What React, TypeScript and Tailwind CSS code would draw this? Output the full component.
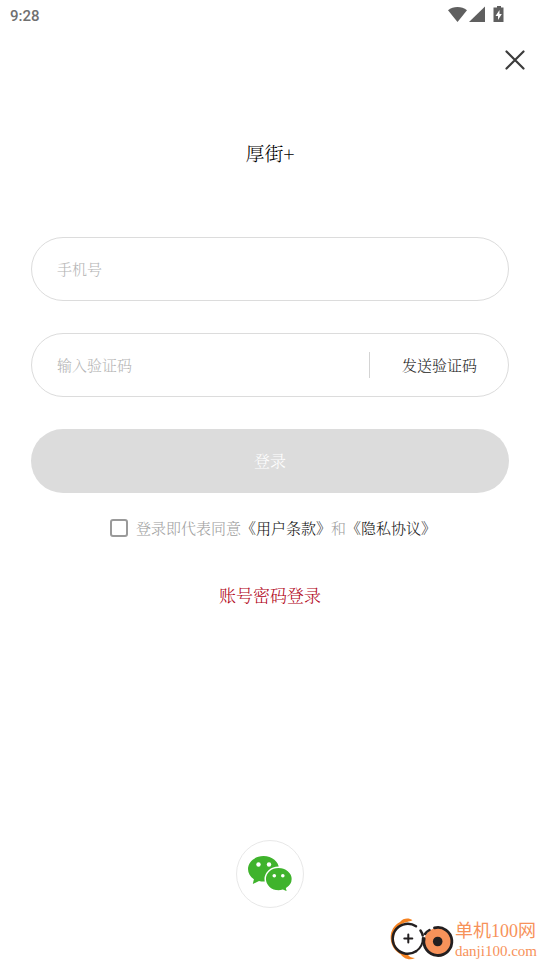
import { useState } from "react";

const StatusBar = () => (
  <div className="flex h-8 items-center justify-between pr-[35px] pl-2.5 text-[#5f5f5f]">
    <span className="font-[Roboto,sans-serif] text-[15px] leading-5 font-medium text-[#707070]">
      9:28
    </span>
    <svg
      className="mb-1 h-[18px] w-[57px]"
      viewBox="0 0 57 18"
      fill="currentColor"
      aria-hidden="true"
    >
      <path d="M0 5.200C5.400.8 13.600.8 19 5.200L9.500 17Z" />
      <path d="M37 1.500V17H21Z" />
      <path
        fillRule="evenodd"
        d="M49 1h4v1.500h2.500V17h-10V2.500H49ZM51.500 5l-4 6h2.500v4l3.800-6H51.500Z"
      />
    </svg>
  </div>
);

const WeChatIcon = () => (
  <svg className="h-9 w-11" viewBox="0 0 44 36" aria-hidden="true">
    <path
      fill="#3fb32c"
      d="M15.500 0C7 0 0 5.800 0 13.100c0 4.100 2.300 7.800 5.900 10.200L4.800 28l6.200-3c1.500.4 3 .6 4.500.6C24 25.600 31 20 31 12.900 31 5.700 24 0 15.500 0Z"
    />
    <path
      fill="#3fb32c"
      stroke="#fff"
      strokeWidth="1.500"
      d="M30.500 11.300c-7.400 0-13.300 5.200-13.300 11.800s5.900 11.800 13.300 11.800c1.600 0 3-.2 4.400-.7l4.800 2.300-1-4.100c3.500-2.200 5.700-5.500 5.700-9.300 0-6.600-6.500-11.800-13.900-11.800Z"
    />
    <g fill="#fff">
      <circle cx="10.500" cy="8.500" r="2.200" />
      <circle cx="21" cy="8.500" r="2.200" />
      <circle cx="26.300" cy="19.700" r="1.800" />
      <circle cx="34.800" cy="19.700" r="1.800" />
    </g>
  </svg>
);

const SiteLogo = () => (
  <svg
    className="h-[42px] w-16"
    viewBox="0 0 64 42"
    fill="none"
    strokeLinecap="round"
    aria-hidden="true"
  >
    <path
      fill="#f58220"
      d="M22.500 2.300C19-.5 13 0 10 4 3 7.500-.5 15 1 23c1.300 7 5.500 11 10 13.500 2 3.500 8 6.500 14 3.500-3 0-5.500-1.200-7-3C9 34 4 29 4 20.500 4 12 9.500 5.500 17 4c2-.8 4-.8 5.500-1.700Z"
    />
    <path
      stroke="#231f20"
      strokeWidth="2.500"
      d="M26 8.300A15 15 0 1 0 26 33.300"
    />
    <path
      stroke="#231f20"
      strokeWidth="2"
      d="M26 33.300C31 30 33 25.500 32.800 20M18.300 16.500v8M14.300 20.500h8"
    />
    <circle cx="47.700" cy="23.500" r="13.500" fill="#f7925a" />
    <path
      stroke="#231f20"
      strokeWidth="2.800"
      d="M44.500 9.900A14 14 0 1 1 34.200 20.500"
    />
    <path
      stroke="#231f20"
      strokeWidth="2.500"
      d="M30.500 12.500c1 1.500 1.800 3 2.200 5M39.500 12c-2 1-3.500 2.300-4.500 4"
    />
    <circle cx="47.700" cy="23.500" r="4.800" fill="#231f20" />
  </svg>
);

export default function App() {
  const [phone, setPhone] = useState("");
  const [code, setCode] = useState("");
  const [agreed, setAgreed] = useState(false);

  return (
    <div
      lang="zh-CN"
      className="flex min-h-screen flex-col bg-white font-['Noto_Serif_CJK_SC','Noto_Sans_CJK_SC',serif] text-[15px] leading-6 font-light text-[#222]"
    >
      <StatusBar />

      <header className="flex justify-end px-[15px] pt-[18px]">
        <button type="button" aria-label="关闭">
          <svg
            className="size-5"
            viewBox="0 0 20 20"
            stroke="#3c3c3c"
            strokeWidth="2.200"
            strokeLinecap="round"
            aria-hidden="true"
          >
            <path d="M1.500 1.500l17 17M18.500 1.500l-17 17" />
          </svg>
        </button>
      </header>

      <main className="flex flex-col px-[31px] pt-[69px]">
        <h1 className="text-center text-[19px] leading-7 text-black">厚街+</h1>

        <form
          className="flex flex-col gap-8 pt-[70px]"
          onSubmit={(e) => e.preventDefault()}
        >
          <input
            type="tel"
            aria-label="手机号"
            placeholder="手机号"
            value={phone}
            onChange={(e) => setPhone(e.target.value)}
            className="h-16 w-full rounded-full border border-[#dcdcdc] px-[25px] pb-0.5 outline-none placeholder:text-[#b4b4b4]"
          />

          <div className="flex h-16 items-center rounded-full border border-[#dcdcdc] pr-[31px] pl-[25px]">
            <input
              type="text"
              aria-label="输入验证码"
              placeholder="输入验证码"
              value={code}
              onChange={(e) => setCode(e.target.value)}
              className="h-full min-w-0 flex-1 pb-0.5 outline-none placeholder:text-[#b4b4b4]"
            />
            <button
              type="button"
              className="border-l border-[#d4d4d4] pl-8 leading-[26px]"
            >
              发送验证码
            </button>
          </div>

          <button
            type="submit"
            className="h-16 rounded-full bg-[#dcdcdc] text-base text-white"
          >
            登录
          </button>
        </form>

        <div className="flex items-center justify-center gap-2 pt-[23px] pl-1.5">
          <input
            id="agree"
            type="checkbox"
            checked={agreed}
            onChange={(e) => setAgreed(e.target.checked)}
            className="size-[18px] appearance-none rounded-[3px] border-2 border-[#9a9a9a] checked:bg-[#9a9a9a]"
          />
          <p className="text-[#a0a0a0]">
            <label htmlFor="agree">登录即代表同意</label>
            <a href="#terms" className="text-[#111]">
              《用户条款》
            </a>
            和
            <a href="#privacy" className="text-[#111]">
              《隐私协议》
            </a>
          </p>
        </div>

        <a
          href="#password"
          className="mt-[43px] self-center text-[17px] text-[#b00015]"
        >
          账号密码登录
        </a>
      </main>

      <footer className="mt-auto flex flex-col items-center gap-2.5 pt-10">
        <button
          type="button"
          aria-label="微信登录"
          className="flex size-[68px] items-center justify-center rounded-full border border-[#e8e8e8]"
        >
          <WeChatIcon />
        </button>

        <div className="flex items-center gap-px self-end pr-[3px] text-[#f7925a]">
          <SiteLogo />
          <div className="font-['Liberation_Serif','Noto_Sans_CJK_SC',serif] font-normal">
            <p className="text-lg leading-6">单机100网</p>
            <p className="text-[15px] leading-4">danji100.com</p>
          </div>
        </div>
      </footer>
    </div>
  );
}
